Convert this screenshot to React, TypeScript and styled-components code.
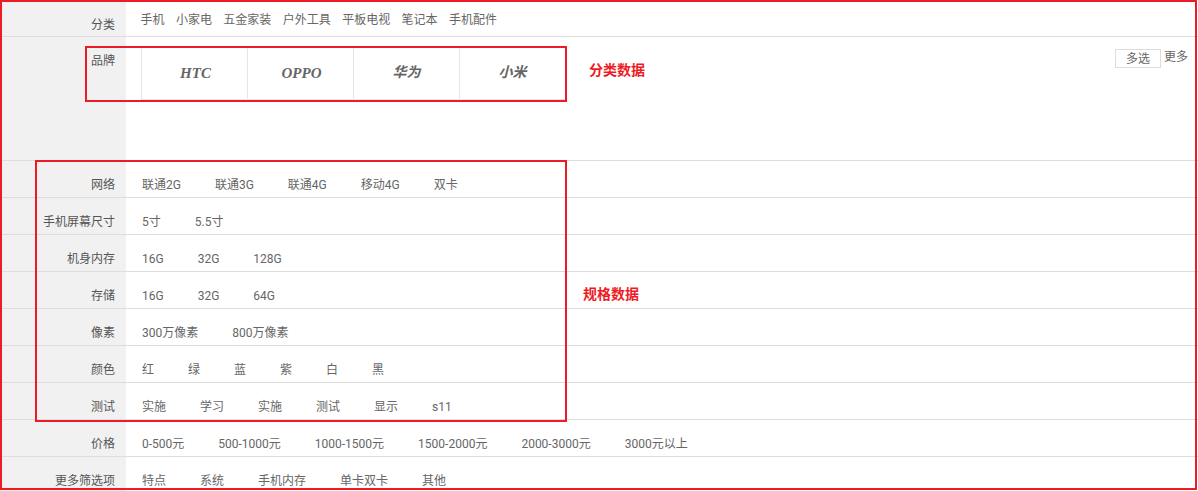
import React from "react";
import styled, { createGlobalStyle } from "styled-components";

const Global = createGlobalStyle`
  html, body { margin: 0; padding: 0; background: #fff; overflow: hidden; }
  * { box-sizing: border-box; }
`;

const Page = styled.div`
  position: relative;
  width: 1198px;
  height: 491px;
  overflow: hidden;
  font: 12px/18px Roboto, "Noto Sans CJK SC", sans-serif;
  color: #666;
`;

const Row = styled.div<{ $h: number }>`
  display: grid;
  grid-template-columns: 126px 1fr;
  height: ${(p) => p.$h}px;
  border-bottom: 1px solid #ddd;
`;

const Label = styled.div<{ $top: number }>`
  background: #f1f1f1;
  text-align: right;
  padding: ${(p) => p.$top}px 11px 0 0;
  color: #555;
`;

const Values = styled.div<{ $gap: number; $left: number; $top: number }>`
  display: flex;
  gap: ${(p) => p.$gap}px;
  padding: ${(p) => p.$top}px 0 0 ${(p) => p.$left}px;
`;

const Value = styled.span`
  color: #666;
  white-space: nowrap;
`;

const BrandCell = styled.div`
  display: flex;
  justify-content: space-between;
  padding: 10px 8px 0 15px;
`;

const BrandList = styled.div`
  display: flex;
  height: 53px;
  border-bottom: 1px solid #e6e6e6;
`;

const Brand = styled.div<{ $latin?: boolean }>`
  width: 106px;
  border-left: 1px solid #e6e6e6;
  display: flex;
  align-items: center;
  justify-content: center;
  padding-left: ${(p) => (p.$latin ? 2 : 0)}px;
  font: italic bold ${(p) => (p.$latin ? 15 : 14)}px/18px "Liberation Serif", "Noto Sans CJK SC", serif;
  color: #666;
`;

const Actions = styled.div`
  display: flex;
  align-items: flex-start;
  gap: 3px;
  padding: 2px 2px 0 0;
`;

const MultiButton = styled.button`
  width: 46px;
  height: 19px;
  padding: 1px 0 0;
  border: 1px solid #ddd;
  background: #fff;
  color: #666;
  font: 12px/17px Roboto, "Noto Sans CJK SC", sans-serif;
`;

const More = styled.span`
  color: #666;
  margin-top: -1px;
`;

const Frame = styled.div`
  position: absolute;
  inset: 0 1px 1px 0;
  border: 2px solid #ed1c24;
  pointer-events: none;
`;

const Callout = styled.div<{ $x: number; $y: number; $w: number; $h: number }>`
  position: absolute;
  left: ${(p) => p.$x}px;
  top: ${(p) => p.$y}px;
  width: ${(p) => p.$w}px;
  height: ${(p) => p.$h}px;
  border: 2px solid #ed1c24;
  pointer-events: none;
`;

const Note = styled.div<{ $x: number; $y: number }>`
  position: absolute;
  left: ${(p) => p.$x}px;
  top: ${(p) => p.$y}px;
  color: #ed1c24;
  font-weight: bold;
  font-size: 14px;
  line-height: 18px;
  white-space: nowrap;
`;

const specs: { label: string; items: string[] }[] = [
  { label: "网络", items: ["联通2G", "联通3G", "联通4G", "移动4G", "双卡"] },
  { label: "手机屏幕尺寸", items: ["5寸", "5.5寸"] },
  { label: "机身内存", items: ["16G", "32G", "128G"] },
  { label: "存储", items: ["16G", "32G", "64G"] },
  { label: "像素", items: ["300万像素", "800万像素"] },
  { label: "颜色", items: ["红", "绿", "蓝", "紫", "白", "黑"] },
  { label: "测试", items: ["实施", "学习", "实施", "测试", "显示", "s11"] },
  { label: "价格", items: ["0-500元", "500-1000元", "1000-1500元", "1500-2000元", "2000-3000元", "3000元以上"] },
  { label: "更多筛选项", items: ["特点", "系统", "手机内存", "单卡双卡", "其他"] },
];

export default function App() {
  return (
    <Page>
      <Global />
      <Row $h={37}>
        <Label $top={16}>分类</Label>
        <Values $gap={11.4} $left={14.5} $top={11}>
          {["手机", "小家电", "五金家装", "户外工具", "平板电视", "笔记本", "手机配件"].map((t) => (
            <Value key={t}>{t}</Value>
          ))}
        </Values>
      </Row>
      <Row $h={124}>
        <Label $top={15}>品牌</Label>
        <BrandCell>
          <BrandList>
            {["HTC", "OPPO"].map((b) => (
              <Brand key={b} $latin>{b}</Brand>
            ))}
            {["华为", "小米"].map((b) => (
              <Brand key={b}>{b}</Brand>
            ))}
          </BrandList>
          <Actions>
            <MultiButton>多选</MultiButton>
            <More>更多</More>
          </Actions>
        </BrandCell>
      </Row>
      {specs.map((s) => (
        <Row key={s.label} $h={37}>
          <Label $top={15}>{s.label}</Label>
          <Values $gap={34} $left={16} $top={15}>
            {s.items.map((t, i) => (
              <Value key={i}>{t}</Value>
            ))}
          </Values>
        </Row>
      ))}
      <Frame />
      <Callout $x={85} $y={46} $w={482} $h={56} />
      <Callout $x={35} $y={160} $w={532} $h={262} />
      <Note $x={589} $y={61}>分类数据</Note>
      <Note $x={583} $y={285}>规格数据</Note>
    </Page>
  );
}
